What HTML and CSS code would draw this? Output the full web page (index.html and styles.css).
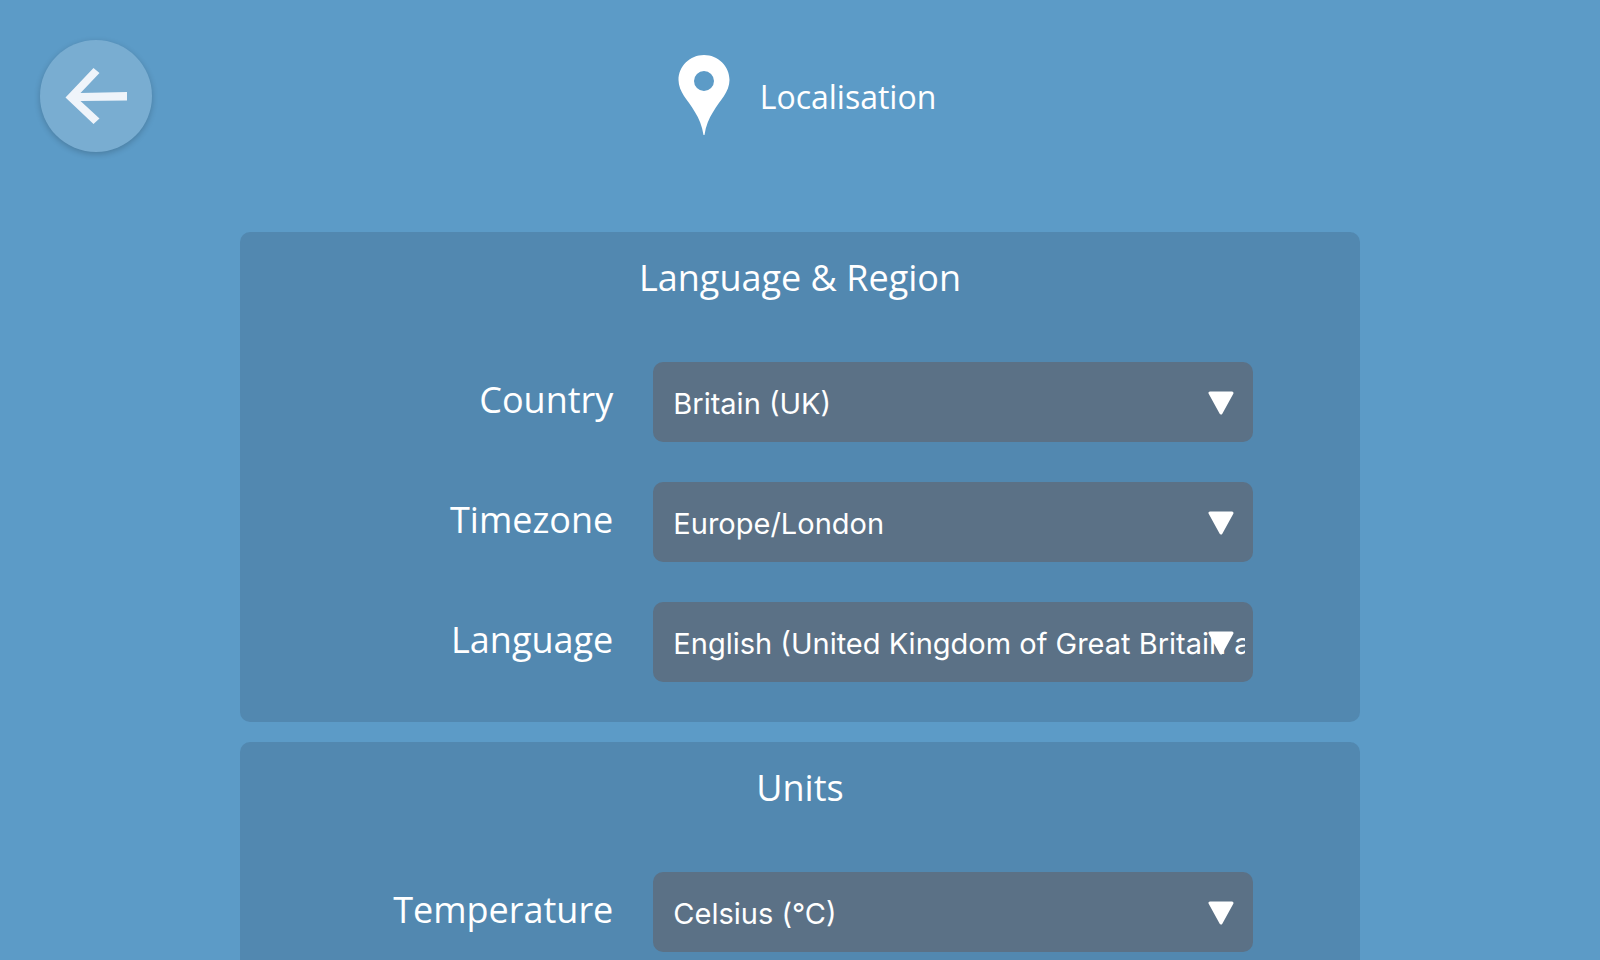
FILE: index.html
```html
<!DOCTYPE html>
<html lang="en">
<head>
<meta charset="utf-8">
<meta name="viewport" content="width=device-width, initial-scale=1">
<title>Localisation</title>
<link rel="stylesheet" href="styles.css">
</head>
<body>
<header class="header">
  <button class="back" type="button" aria-label="Back">
    <svg class="back-icon" viewBox="0 0 112 112" aria-hidden="true"><path d="M25.500 57.500L53.500 28L59.500 33L40.500 53L87 52V60.500L40.500 61L59.500 78.500L53.500 84Z"/></svg>
  </button>
  <h1 class="title">
    <svg class="pin" viewBox="0 0 52 84" aria-hidden="true"><path fill-rule="evenodd" d="M26 1C12 1 .5 12 .5 26C.5 32 3 37 6 42C12 51 23 63 25.500 81H26.500C29 63 40 51 46 42C49 37 51.500 32 51.500 26C51.500 12 40 1 26 1ZM26 17A10 10 0 1 1 26 37A10 10 0 1 1 26 17Z"/></svg>
    <span class="title-text">Localisation</span>
  </h1>
</header>
<main class="settings">
  <section class="card">
    <h2 class="card-title">Language &amp; Region</h2>
    <div class="row">
      <label class="label" for="country">Country</label>
      <div class="field">
        <select class="select" id="country"><option>Britain (UK)</option></select>
        <svg class="caret" viewBox="0 0 26 24" aria-hidden="true"><path d="M2 2H24L13 22Z"/></svg>
      </div>
    </div>
    <div class="row">
      <label class="label" for="timezone">Timezone</label>
      <div class="field">
        <select class="select" id="timezone"><option>Europe/London</option></select>
        <svg class="caret" viewBox="0 0 26 24" aria-hidden="true"><path d="M2 2H24L13 22Z"/></svg>
      </div>
    </div>
    <div class="row">
      <label class="label" for="language">Language</label>
      <div class="field">
        <select class="select" id="language"><option>English (United Kingdom of Great Britain and Northern Ireland)</option></select>
        <svg class="caret" viewBox="0 0 26 24" aria-hidden="true"><path d="M2 2H24L13 22Z"/></svg>
      </div>
    </div>
  </section>
  <section class="card">
    <h2 class="card-title">Units</h2>
    <div class="row">
      <label class="label" for="temperature">Temperature</label>
      <div class="field">
        <select class="select" id="temperature"><option>Celsius (°C)</option></select>
        <svg class="caret" viewBox="0 0 26 24" aria-hidden="true"><path d="M2 2H24L13 22Z"/></svg>
      </div>
    </div>
  </section>
</main>
</body>
</html>
```
FILE: styles.css
```css
* {
  box-sizing: border-box;
}

html {
  height: 100%;
  overflow: hidden;
}

body {
  margin: 0;
  height: 100%;
  overflow: hidden;
  background: #5c9bc7;
  color: #fff;
  font-family: "Open Sans", sans-serif;
}

.header {
  display: grid;
  grid-template-columns: 1fr auto 1fr;
  align-items: center;
  padding: 40px 40px 80px;
}

.back {
  width: 112px;
  height: 112px;
  padding: 0;
  border: 0;
  border-radius: 50%;
  background: rgba(255, 255, 255, 0.18);
  box-shadow: 0 2px 6px rgba(0, 0, 0, 0.2);
}

.back-icon {
  display: block;
  width: 100%;
  fill: #eff4fa;
}

.title {
  display: flex;
  align-items: center;
  gap: 30px;
  margin: 0;
  padding-left: 14px;
  font-size: 32px;
  line-height: 44px;
  font-weight: 400;
}

.title-text {
  padding-top: 2px;
}

.pin {
  width: 52px;
  height: 84px;
  fill: #fff;
}

.settings {
  display: flex;
  flex-direction: column;
  gap: 20px;
  width: 70%;
  margin: 0 auto;
}

.card {
  display: flex;
  flex-direction: column;
  gap: 40px;
  padding-bottom: 40px;
  border-radius: 10px;
  background: #5288b0;
}

.card-title {
  margin: 0;
  padding: 21px 0 19px;
  font-size: 36px;
  line-height: 50px;
  font-weight: 400;
  text-align: center;
}

.row {
  display: grid;
  grid-template-columns: 1fr 2fr;
  align-items: center;
}

.label {
  padding-bottom: 4px;
  font-size: 36px;
  line-height: 50px;
  text-align: right;
}

.field {
  position: relative;
  max-width: 640px;
  padding-left: 40px;
}

.select {
  display: block;
  appearance: none;
  width: 100%;
  height: 80px;
  padding: 2px 8px 0 20px;
  border: 0;
  border-radius: 10px;
  background: #5b7186;
  color: #fff;
  font-family: Inter, sans-serif;
  font-size: 29px;
}

.caret {
  position: absolute;
  right: 19px;
  top: 29px;
  width: 26px;
  height: 24px;
  fill: #fff;
  stroke: #fff;
  stroke-width: 3;
  stroke-linejoin: round;
  pointer-events: none;
}
```
